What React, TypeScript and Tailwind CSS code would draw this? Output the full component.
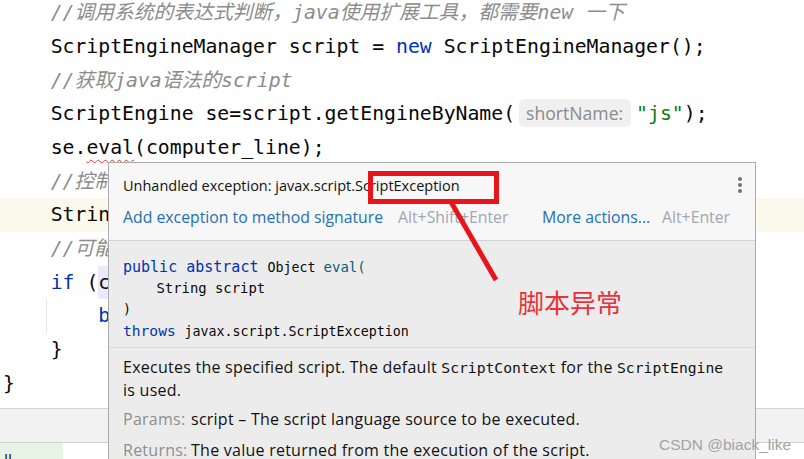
import React from "react";

const MONO = "font-['DejaVu_Sans_Mono','Noto_Sans_CJK_SC',monospace]";
const SANS = "font-['Open_Sans','Noto_Sans_CJK_SC',sans-serif]";

function Line({ children, className = "" }: { children?: React.ReactNode; className?: string }) {
  return (
    <div className={`relative h-[33.7px] leading-[33.7px] whitespace-pre pl-[3px] ${className}`}>
      {children}
    </div>
  );
}

const Cm = ({ children }: { children: React.ReactNode }) => (
  <span className="italic text-[#8c8c8c]">{children}</span>
);
const Kw = ({ children }: { children: React.ReactNode }) => (
  <span className="text-[#0033b3]">{children}</span>
);

export default function App() {
  return (
    <div className="relative w-[804px] h-[459px] overflow-hidden bg-white">
      {/* Editor */}
      <div className={`h-[408px] overflow-hidden ${MONO} text-[19.8px] text-[#080808]`}>
        <div className="mt-[-3.85px]">
          <Line>
            <Cm>{"    //调用系统的表达式判断，java使用扩展工具，都需要new 一下"}</Cm>
          </Line>
          <Line>
            {"    ScriptEngineManager script = "}
            <Kw>new</Kw>
            {" ScriptEngineManager();"}
          </Line>
          <Line>
            <Cm>{"    //获取java语法的script"}</Cm>
          </Line>
          <Line>
            {"    ScriptEngine se=script.getEngineByName("}
            <span
              className={`inline-flex items-center align-middle h-[28px] w-[112px] ml-[4px] mr-[5px] pl-[7px] mt-[-3px] rounded-[5px] bg-[#f0f0f0] ${SANS} text-[17.6px] leading-[28px] text-[#8a8a8a]`}
            >
              shortName:
            </span>
            <span className="text-[#067d17]">"js"</span>
            {");"}
          </Line>
          <Line>
            {"    se."}
            <span className="underline decoration-wavy decoration-[#e53935] decoration-1 underline-offset-[5px]">eval</span>
            {"(computer_line);"}
          </Line>
          <Line>
            <Cm>{"    //控制台输出"}</Cm>
          </Line>
          <Line className="bg-[#fbf8ec]">{"    String result = se.eval(line);"}</Line>
          <Line>
            <Cm>{"    //可能会出现异常"}</Cm>
          </Line>
          <Line>
            {"    "}
            <Kw>if</Kw>
            {" ("}
            <span className="bg-[#ece9fb] inline-block leading-[33.7px]">c</span>
            {"omputer_line)"}
          </Line>
          <Line>
            <span className="absolute left-[46px] top-0 bottom-0 w-px bg-[#e4e4e4]" />
            {"        "}
            <Kw>break</Kw>
            {";"}
          </Line>
          <Line>{"    }"}</Line>
          <Line>{"}"}</Line>
        </div>
      </div>
      {/* bottom panel */}
      <div className="h-[35px] border-t border-b border-[#d2d2d2] bg-[#f2f2f2]" />
      <div className="flex h-[16px] overflow-hidden">
        <div className={`w-[63px] bg-[#e7f3e4] pl-[4px] pt-[8px] ${SANS} text-[16px] leading-[18px] text-[#222]`}>ll</div>
      </div>

      {/* Popup */}
      <div className={`absolute left-[108px] top-[162px] w-[648px] h-[320px] border border-[#ababab] ${SANS}`}>
        <div className="bg-[#f7f7f7] h-[78px] pl-[14px] pr-[10px] pt-[12px] border-b border-[#d3d3d3]">
          <div className="flex items-center h-[22px] justify-between">
            <span className="text-[14.5px] text-[#121212]">Unhandled exception: javax.script.ScriptException</span>
            <div className="flex flex-col items-center gap-[2px] mr-[3px] mt-[-2px]">
              <span className="w-[4px] h-[4px] rounded-full bg-[#737373]" />
              <span className="w-[4px] h-[4px] rounded-full bg-[#737373]" />
              <span className="w-[4px] h-[4px] rounded-full bg-[#737373]" />
            </div>
          </div>
          <div className="flex items-center h-[22px] mt-[10px] text-[15.8px] whitespace-nowrap">
            <span className="w-[275px] text-[#2470b3]">Add exception to method signature</span>
            <span className="w-[144px] text-[#a0a7b0]">Alt+Shift+Enter</span>
            <span className="w-[120px] text-[#2470b3]">More actions...</span>
            <span className="text-[#a0a7b0]">Alt+Enter</span>
          </div>
        </div>
        <div className="bg-[#ececec] h-full">
          <div className={`pl-[14px] pt-[16px] pb-[6px] border-b border-[#d6d6d6] ${MONO} text-[13.3px] text-[#080808]`}>
            <div className="h-[21px] leading-[21px] whitespace-pre">
              <span className="text-[15px] text-[#0033b3]">public abstract </span>
              <span>Object </span>
              <span className="text-[14px] text-[#00627a]">eval(</span>
            </div>
            <div className="h-[21px] leading-[21px] whitespace-pre text-[13.9px]">{"    String script"}</div>
            <div className="h-[21px] leading-[21px] whitespace-pre">)</div>
            <div className="h-[21px] leading-[21px] whitespace-pre">
              <span className="text-[14.6px] text-[#0033b3]">throws </span>
              <span>javax.script.ScriptException</span>
            </div>
          </div>
          <div className="pl-[14px] pt-[8px] text-[16px] tracking-[0.25px] text-[#121212] leading-[23px]">
            <p>
              Executes the specified script. The default{" "}
              <span className={`${MONO} text-[14.7px] tracking-normal`}>ScriptContext</span> for the{" "}
              <span className={`${MONO} text-[14.7px] tracking-normal`}>ScriptEngine</span>
              <br />
              is used.
            </p>
            <p className="mt-[6px] flex">
              <span className="w-[68px] shrink-0 text-[#8e8e8e]">Params:</span>
              <span>script – The script language source to be executed.</span>
            </p>
            <p className="mt-[8px] flex">
              <span className="w-[68px] shrink-0 text-[#8e8e8e]">Returns:</span>
              <span>The value returned from the execution of the script.</span>
            </p>
          </div>
        </div>
      </div>

      {/* Red annotation */}
      <div className="absolute left-[368px] top-[171px] w-[131px] h-[33px] border-[5px] border-[#e8141c]" />
      <svg className="absolute left-0 top-0" width="804" height="459" viewBox="0 0 804 459">
        <line x1="451" y1="202" x2="496" y2="280" stroke="#e8141c" strokeWidth="5" />
      </svg>
      <div className="absolute left-[518px] top-[284px] font-['Noto_Sans_CJK_SC',sans-serif] text-[26px] leading-[36px] text-[#e8323a]">
        脚本异常
      </div>

      {/* watermark */}
      <div className="absolute left-[659px] top-[433px] font-['Liberation_Sans',sans-serif] text-[15.5px] text-[#a3a3a3]">
        CSDN @biack_like
      </div>
    </div>
  );
}
